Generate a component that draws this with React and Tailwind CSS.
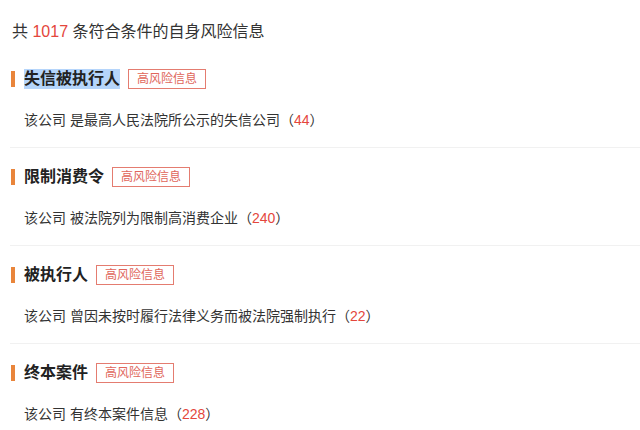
const items = [
  { title: '失信被执行人', desc: '是最高人民法院所公示的失信公司', count: 44, selected: true },
  { title: '限制消费令', desc: '被法院列为限制高消费企业', count: 240 },
  { title: '被执行人', desc: '曾因未按时履行法律义务而被法院强制执行', count: 22 },
  { title: '终本案件', desc: '有终本案件信息', count: 228 },
];

export default function App() {
  return (
    <div
      className="w-[640px] h-[430px] overflow-hidden bg-white text-[#333]"
      style={{ fontFamily: '"Liberation Sans", "Noto Sans CJK SC", sans-serif' }}
    >
      {/* Summary */}
      <div className="pt-[22px] pl-3 h-5 leading-5 text-base mb-2 box-content">
        共 <span className="text-[#e4463c]">1017</span> 条符合条件的自身风险信息
      </div>

      {items.map((it) => (
        <div key={it.title} className="ml-[10px] pt-[19px] pb-[17px] border-b border-[#f1f1f1]">
          <div className="flex items-center h-5">
            <div className="w-[4px] h-4 bg-[#e9853b] ml-px"></div>
            <span
              className={`ml-[9px] text-base font-semibold leading-5 text-[#222] ${it.selected ? 'bg-[#b5d5fb]' : ''}`}
            >
              {it.title}
            </span>
            <span className="ml-2 h-5 px-2 border border-[#e47c70] text-[#e0665b] text-xs leading-[18px]">
              高风险信息
            </span>
          </div>
          <div className="mt-[21px] pl-[14px] text-sm leading-5">
            该公司 {it.desc}（<span className="text-[#e4463c]">{it.count}</span>）
          </div>
        </div>
      ))}
    </div>
  );
}
